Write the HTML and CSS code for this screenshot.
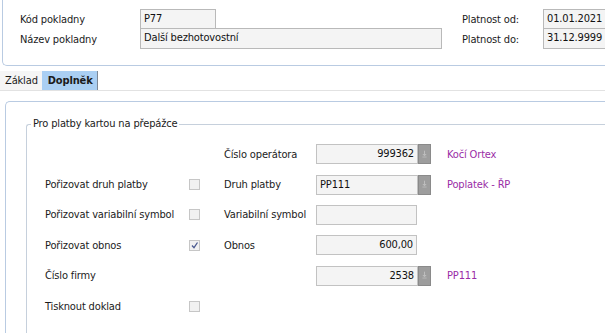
FILE: index.html
```html
<!DOCTYPE html>
<html lang="cs">
<head>
    <meta charset="UTF-8">
    <meta name="viewport" content="width=device-width, initial-scale=1.0">
    <title>Pokladna - Doplněk</title>
    <link rel="stylesheet" href="styles.css">
</head>
<body>

    <div class="header-panel">
        <div class="header-grid main">
            <label>Kód pokladny</label>
            <div class="field code">P77</div>
            <label>Název pokladny</label>
            <div class="field name">Další bezhotovostní</div>
        </div>
        <div class="header-grid dates">
            <label>Platnost od:</label>
            <div class="field date">01.01.2021</div>
            <label>Platnost do:</label>
            <div class="field date">31.12.9999</div>
        </div>
    </div>

    <div class="tabs">
        <div class="tab">Základ</div>
        <div class="tab active">Doplněk</div>
    </div>

    <div class="content-panel">
        <fieldset class="group">
            <legend>Pro platby kartou na přepážce</legend>

            <div class="form-grid">
                <!-- row 1 -->
                <span></span>
                <span></span>
                <label>Číslo operátora</label>
                <div class="lookup">
                    <div class="field num">999362</div>
                    <button class="lookup-btn" tabindex="-1">
                        <svg width="13" height="19" viewBox="0 0 13 19"><path d="M6.5 5v5" stroke="#bdbdbd" stroke-width="1.2"/><path d="M4 9h5l-2.5 2.5z" fill="#bdbdbd"/><path d="M4 12.5h5" stroke="#bdbdbd"/></svg>
                    </button>
                </div>
                <span class="info">Kočí Ortex</span>

                <!-- row 2 -->
                <label>Pořizovat druh platby</label>
                <span class="check"></span>
                <label>Druh platby</label>
                <div class="lookup">
                    <div class="field">PP111</div>
                    <button class="lookup-btn" tabindex="-1">
                        <svg width="13" height="19" viewBox="0 0 13 19"><path d="M6.5 5v5" stroke="#bdbdbd" stroke-width="1.2"/><path d="M4 9h5l-2.5 2.5z" fill="#bdbdbd"/><path d="M4 12.5h5" stroke="#bdbdbd"/></svg>
                    </button>
                </div>
                <span class="info">Poplatek - ŘP</span>

                <!-- row 3 -->
                <label>Pořizovat variabilní symbol</label>
                <span class="check"></span>
                <label>Variabilní symbol</label>
                <div class="field plain"></div>
                <span></span>

                <!-- row 4 -->
                <label>Pořizovat obnos</label>
                <span class="check checked">
                    <svg width="9" height="9" viewBox="0 0 9 9"><path d="M2 4.5l2 2.2L7.5 1.5" fill="none" stroke="#4b5a90" stroke-width="1.3"/></svg>
                </span>
                <label>Obnos</label>
                <div class="field plain num">600,00</div>
                <span></span>

                <!-- row 5 -->
                <label>Číslo firmy</label>
                <span></span>
                <span></span>
                <div class="lookup">
                    <div class="field num">2538</div>
                    <button class="lookup-btn" tabindex="-1">
                        <svg width="13" height="19" viewBox="0 0 13 19"><path d="M6.5 5v5" stroke="#bdbdbd" stroke-width="1.2"/><path d="M4 9h5l-2.5 2.5z" fill="#bdbdbd"/><path d="M4 12.5h5" stroke="#bdbdbd"/></svg>
                    </button>
                </div>
                <span class="info">PP111</span>

                <!-- row 6 -->
                <label>Tisknout doklad</label>
                <span class="check"></span>
                <span></span>
                <span></span>
                <span></span>
            </div>
        </fieldset>
    </div>

</body>
</html>
```

FILE: styles.css
```css
body {
    margin: 0;
    width: 605px;
    height: 333px;
    overflow: hidden;
    font-family: "DejaVu Sans Condensed", "DejaVu Sans", sans-serif;
    font-stretch: condensed;
    font-size: 11px;
    letter-spacing: -0.15px;
    color: #1b1b1b;
    background: #fff;
    white-space: nowrap;
}
.header-panel {
    display: flex;
    margin-left: 2px;
    width: 603px;
    height: 66px;
    box-sizing: border-box;
    overflow: hidden;
    padding: 9px 0 0 17px;
    border-left: 1px solid #b9cbe2;
    border-bottom: 1px solid #b9cbe2;
    border-bottom-left-radius: 5px;
}
.header-grid {
    display: grid;
    grid-auto-rows: 20px;
    align-items: center;
    flex-shrink: 0;
}
.header-grid.main {
    grid-template-columns: 120px 302px;
}
.header-grid.dates {
    margin-left: 20px;
    grid-template-columns: 81px 80px;
}
.field {
    box-sizing: border-box;
    height: 20px;
    line-height: 18px;
    padding: 0 3px;
    background: #f4f4f4;
    border: 1px solid #c2c2c2;
    color: #111;
}
.header-grid .field {
    height: 21px;
    border-color: #b9b9b9;
}
.header-grid .field + label + .field {
    margin-top: -1px;
}
.field.code {
    width: 76px;
}
.field.name {
    width: 302px;
}
.tabs {
    display: flex;
    margin-top: 5px;
    height: 19px;
    border-bottom: 1px solid #e2e2e2;
}
.tab {
    padding: 0 4px 0 5px;
    line-height: 19px;
    background: #f5f5f5;
}
.tab.active {
    padding: 0 4px 0 6px;
    font-weight: bold;
    background: #aacff3;
    border-right: 1px solid #7d8896;
}
.content-panel {
    margin: 10px 0 0 5px;
    height: 231px;
    border-top: 1px solid #b9cbe2;
    border-left: 1px solid #b9cbe2;
    border-top-left-radius: 5px;
}
.group {
    box-sizing: border-box;
    margin: 15px 0 0 20px;
    padding: 8px 0 0 18px;
    height: 216px;
    border: none;
    border-top: 1px solid #c6d0dc;
    border-left: 1px solid #c6d0dc;
    border-top-left-radius: 3px;
}
.group legend {
    margin-left: -14px;
    padding: 0 2px;
    line-height: 14px;
}
.form-grid {
    display: grid;
    grid-template-columns: 144px 35px 92px 131px auto;
    grid-auto-rows: 30.4px;
    align-items: center;
}
.check {
    box-sizing: border-box;
    width: 11px;
    height: 11px;
    border: 1px solid #c6c6c6;
    background: #f1f1f1;
    display: flex;
    align-items: center;
    justify-content: center;
}
.check svg {
    display: block;
}
.lookup {
    display: flex;
}
.lookup .field {
    width: 102px;
}
.field.plain {
    width: 101px;
}
.field.num {
    text-align: right;
}
.lookup-btn {
    width: 13px;
    height: 20px;
    padding: 0;
    margin: 0;
    border: 1px solid #8a8a8a;
    background: #9d9d9d;
    display: flex;
    align-items: center;
    justify-content: center;
}
.info {
    color: #9a2ca6;
}
```
